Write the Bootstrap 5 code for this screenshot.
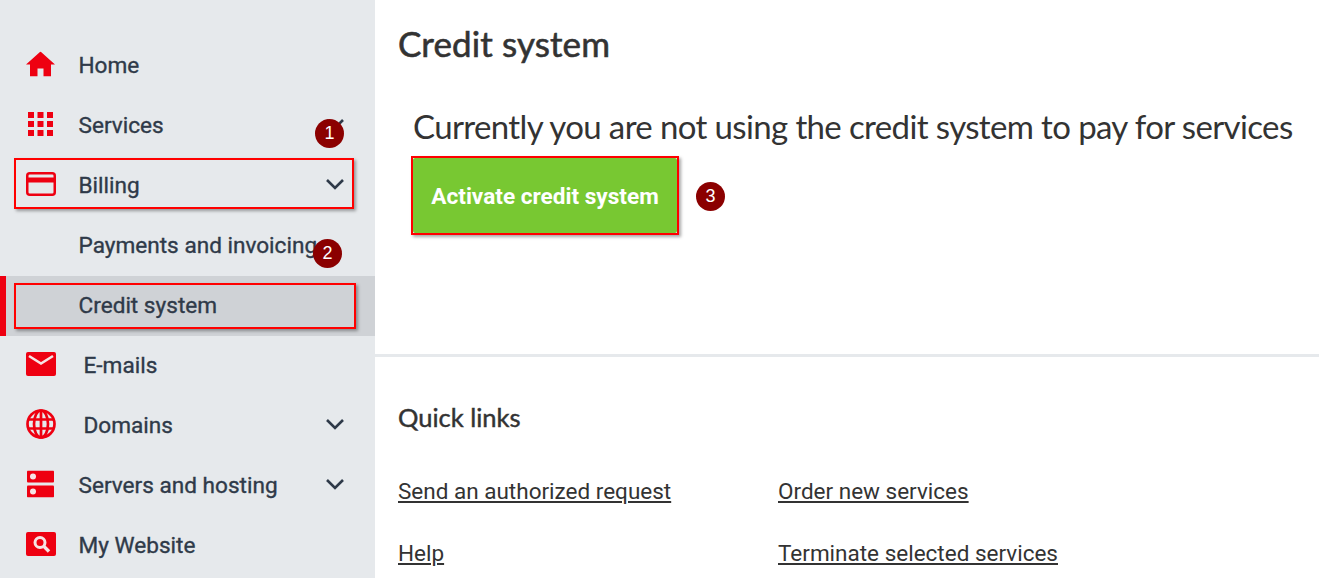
<!DOCTYPE html>
<html lang="en">
<head>
<meta charset="utf-8">
<title>Credit system</title>
<link href="https://cdn.jsdelivr.net/npm/bootstrap@5.3.0/dist/css/bootstrap.min.css" rel="stylesheet">
<style>
html,body{height:578px;overflow:hidden;background:#fff;}
body{font-family:Roboto,sans-serif;color:#333;}
.shell{height:578px;overflow:hidden;}
.side{width:375px;flex:none;background:#e6e9ec;padding-top:36px;}
.mi{height:60px;position:relative;color:#2f3a49;font-size:22.6px;font-weight:400;-webkit-text-stroke:.35px #2f3a49;text-decoration:none;}
.mi svg.ico{position:absolute;left:26px;top:calc(50% - 2px);transform:translateY(-50%);}
.mi .lbl{margin-left:78.5px;}
.mi .lbl.wide{margin-left:83.5px;}
.mi .chev{position:absolute;left:325px;top:22px;}
.mi.cur{background:#cfd2d6;border-left:6px solid #ee0011;}
.mi.cur .lbl{margin-left:72.5px;}
.frame{position:absolute;border:2px solid #f00;box-shadow:2px 2px 3px rgba(0,0,0,.35);pointer-events:none;}
.f-bill{left:14px;top:2px;width:340px;height:51px;}
.f-cred{left:8px;top:7px;width:342px;height:46px;}
.num{position:absolute;width:29px;height:29px;border-radius:50%;background:#8b0000;color:#fff;font:18px/29px "Liberation Sans",sans-serif;text-align:center;-webkit-text-stroke:0;}
.n1{left:315px;top:23px;}
.n2{left:313px;top:23px;}
.n3{left:283px;top:24px;}
.mainc{min-width:0;}
.head{font-family:Lato,sans-serif;font-size:35px;font-weight:400;-webkit-text-stroke:.6px #333;color:#333;padding:21px 0 0 23px;margin:0 0 2px;line-height:44px;letter-spacing:.1px;}
.sect{height:290px;padding:39px 0 0 38px;border-bottom:3px solid #e6e9ec;}
.intro{font-family:Lato,sans-serif;font-size:33px;font-weight:400;color:#333;line-height:40px;white-space:nowrap;margin:0 0 12px;letter-spacing:-.63px;}
.cta-wrap{position:relative;width:264px;}
.cta{display:block;width:264px;height:75px;background:#78c832;border:0;border-radius:2px;color:#fff;font-size:22.6px;font-weight:700;padding:2px 0 0;}
.f-cta{left:-2px;top:-2px;width:268px;height:79px;}
.quick{padding:44px 0 0 23px;}
.qt{font-family:Lato,sans-serif;font-size:25.5px;font-weight:400;-webkit-text-stroke:.45px #333;color:#333;line-height:32px;margin:0 0 41px;}
.qgrid{display:grid;grid-template-columns:380px 1fr;row-gap:28px;}
.qgrid a{color:#333;font-size:22.5px;line-height:34px;text-decoration:underline;}
</style>
</head>
<body>
<div class="shell d-flex">
  <nav class="side">
    <a class="mi d-flex align-items-center" href="#"><svg class="ico" width="29" height="25" viewBox="0 0 29 25"><path fill="#ee0011" d="M14.500 0 0 13h4v12h7.500v-8h6v8H25V13h4z"/></svg><span class="lbl">Home</span></a>
    <a class="mi d-flex align-items-center" href="#"><svg class="ico" style="left:28px" width="25" height="24" viewBox="0 0 25 24" fill="#ee0011"><rect width="6" height="6"/><rect x="9.500" width="6" height="6"/><rect x="19" width="6" height="6"/><rect y="9" width="6" height="6"/><rect x="9.500" y="9" width="6" height="6"/><rect x="19" y="9" width="6" height="6"/><rect y="18" width="6" height="6"/><rect x="9.500" y="18" width="6" height="6"/><rect x="19" y="18" width="6" height="6"/></svg><span class="lbl">Services</span><svg class="chev" width="20" height="12" viewBox="0 0 20 12"><path d="M2 2l8 8 8-8" fill="none" stroke="#2f3a49" stroke-width="2.6"/></svg><span class="num n1">1</span></a>
    <a class="mi d-flex align-items-center" href="#"><svg class="ico" width="30" height="24" viewBox="0 0 30 24"><rect x="1.250" y="1.250" width="27.500" height="21.500" rx="2.500" fill="none" stroke="#ee0011" stroke-width="2.500"/><rect x="1" y="5.500" width="28" height="5" fill="#ee0011"/></svg><span class="lbl">Billing</span><svg class="chev" width="20" height="12" viewBox="0 0 20 12"><path d="M2 2l8 8 8-8" fill="none" stroke="#2f3a49" stroke-width="2.6"/></svg><span class="frame f-bill"></span></a>
    <a class="mi d-flex align-items-center" href="#"><span class="lbl">Payments and invoicing</span><span class="num n2">2</span></a>
    <a class="mi cur d-flex align-items-center" href="#"><span class="lbl">Credit system</span><span class="frame f-cred"></span></a>
    <a class="mi d-flex align-items-center" href="#"><svg class="ico" width="30" height="24" viewBox="0 0 30 24"><rect width="30" height="24" rx="2" fill="#ee0011"/><path d="M3 4l12 7.500L27 4" fill="none" stroke="#f6e3e4" stroke-width="2.600"/></svg><span class="lbl wide">E-mails</span></a>
    <a class="mi d-flex align-items-center" href="#"><svg class="ico" width="30" height="30" viewBox="0 0 30 30" fill="none" stroke="#ee0011" stroke-width="2.700"><circle cx="15" cy="15" r="13.500"/><ellipse cx="15" cy="15" rx="7" ry="13.500"/><path d="M15 1v28M2 10.500h26M2 19.500h26"/></svg><span class="lbl wide">Domains</span><svg class="chev" width="20" height="12" viewBox="0 0 20 12"><path d="M2 2l8 8 8-8" fill="none" stroke="#2f3a49" stroke-width="2.6"/></svg></a>
    <a class="mi d-flex align-items-center" href="#"><svg class="ico" style="left:27px" width="27" height="27" viewBox="0 0 27 27"><rect width="27" height="12" rx="1" fill="#ee0011"/><rect y="15" width="27" height="12" rx="1" fill="#ee0011"/><circle cx="6" cy="6" r="3" fill="#f6e3e4"/><circle cx="6" cy="21" r="3" fill="#f6e3e4"/></svg><span class="lbl">Servers and hosting</span><svg class="chev" width="20" height="12" viewBox="0 0 20 12"><path d="M2 2l8 8 8-8" fill="none" stroke="#2f3a49" stroke-width="2.6"/></svg></a>
    <a class="mi d-flex align-items-center" href="#"><svg class="ico" width="30" height="24" viewBox="0 0 30 24"><rect width="30" height="24" rx="2" fill="#ee0011"/><circle cx="14" cy="10.500" r="5" fill="none" stroke="#f6e3e4" stroke-width="3"/><path d="M18 14.500l5 5" stroke="#f6e3e4" stroke-width="3.400"/></svg><span class="lbl">My Website</span></a>
  </nav>
  <main class="mainc flex-grow-1">
    <h1 class="head">Credit system</h1>
    <section class="sect">
      <p class="intro">Currently you are not using the credit system to pay for services</p>
      <div class="cta-wrap">
        <button class="cta btn" type="button">Activate credit system</button>
        <span class="frame f-cta"></span>
        <span class="num n3">3</span>
      </div>
    </section>
    <section class="quick">
      <h2 class="qt">Quick links</h2>
      <div class="qgrid">
        <a href="#">Send an authorized request</a><a href="#">Order new services</a>
        <a href="#">Help</a><a href="#">Terminate selected services</a>
      </div>
    </section>
  </main>
</div>
<script src="https://cdn.jsdelivr.net/npm/bootstrap@5.3.0/dist/js/bootstrap.bundle.min.js"></script>
</body>
</html>
